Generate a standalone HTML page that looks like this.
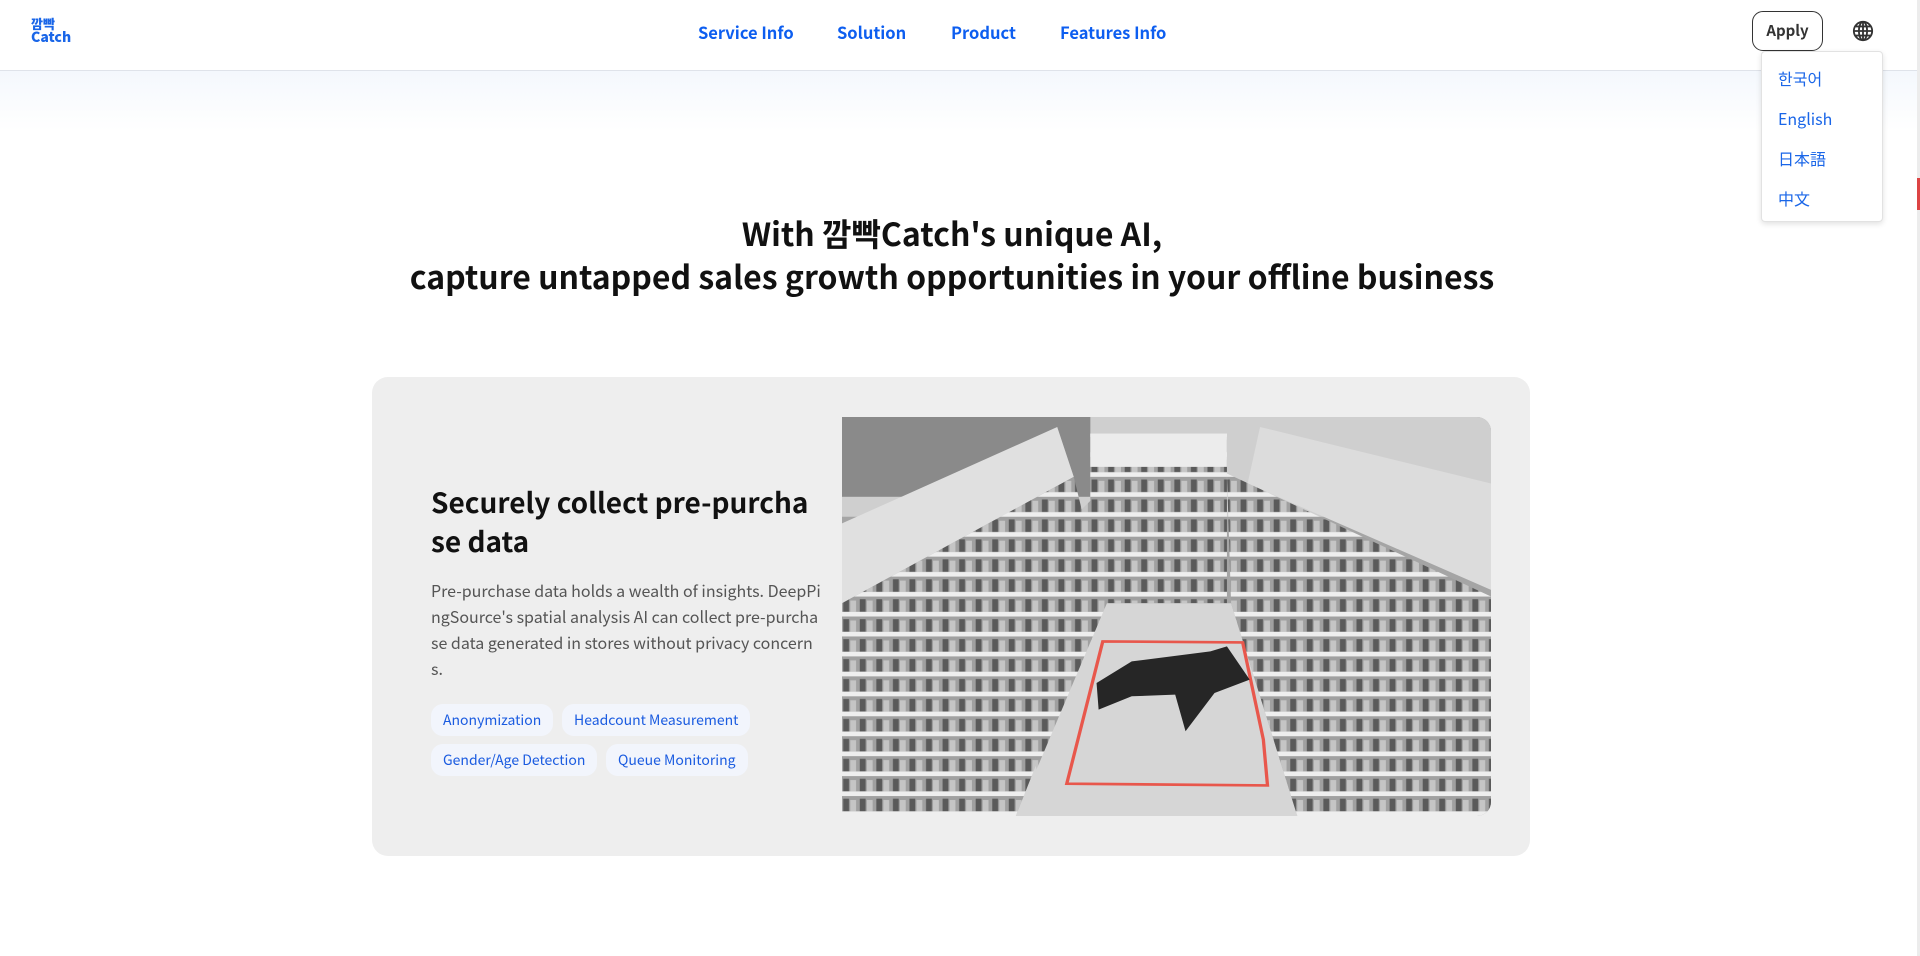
<!DOCTYPE html>
<html><head><meta charset="utf-8">
<style>
*{margin:0;padding:0;box-sizing:border-box}
html,body{width:1920px;height:956px;overflow:hidden;background:#fff;font-family:"Noto Sans CJK KR","Liberation Sans",sans-serif}
.hdr{position:absolute;left:0;top:0;width:1920px;height:71px;border-bottom:1px solid #dfe3ea;background:#fff}
.grad{position:absolute;left:0;top:71px;width:1920px;height:60px;background:linear-gradient(#f4f8fd,#fff)}
.logo{position:absolute;left:31px;top:17px;color:#1a66e8;font-weight:900;line-height:13px;font-size:13px}
.nav{position:absolute;top:19px;font-size:16.5px;font-weight:700;color:#0d5ef0;line-height:26px;white-space:nowrap}
.apply{position:absolute;left:1752px;top:11px;width:71px;height:40px;border:1.5px solid #333;border-radius:11px;font-size:15px;font-weight:700;color:#333;text-align:center;line-height:37px}
.globe{position:absolute;left:1852px;top:20px}
.dd{position:absolute;left:1761px;top:51px;width:122px;height:171px;background:#fff;border:1px solid #e2e2e2;border-radius:4px;box-shadow:0 2px 6px rgba(0,0,0,.12)}
.dd div{position:absolute;left:16px;font-size:16px;color:#1a66e8;line-height:24px}
h1{position:absolute;left:0;top:212px;width:1904px;text-align:center;font-size:32px;font-weight:700;line-height:43px;color:#111}
.card{position:absolute;left:372px;top:377px;width:1158px;height:479px;background:#eeeeee;border-radius:16px}
.title{position:absolute;left:431px;top:483px;font-size:28px;font-weight:700;line-height:39px;color:#111;white-space:nowrap}
.para{position:absolute;left:431px;top:577px;font-size:16px;line-height:26px;color:#555;white-space:nowrap}
.tag{position:absolute;height:32px;border-radius:12px;background:#f2f5fc;color:#1a5be0;font-size:14px;line-height:32px;padding:0 12px;white-space:nowrap}
.img{position:absolute;left:842px;top:417px;width:649px;height:399px;border-radius:0 14px 14px 0;overflow:hidden}
.sb{position:absolute;left:1917px;top:0;width:3px;height:956px;background:#ececec}
</style></head><body>
<div class="hdr"></div><div class="grad"></div>
<div class="logo">깜빡<br><span style="font-size:14px">Catch</span></div>
<div class="nav" style="left:698px">Service Info</div>
<div class="nav" style="left:837px">Solution</div>
<div class="nav" style="left:951px">Product</div>
<div class="nav" style="left:1060px">Features Info</div>
<div class="apply">Apply</div>
<svg class="globe" width="22" height="22" viewBox="0 0 24 24" fill="none" stroke="#333" stroke-width="2"><circle cx="12" cy="12" r="10"/><ellipse cx="12" cy="12" rx="4.5" ry="10"/><line x1="2" y1="12" x2="22" y2="12"/><line x1="12" y1="2" x2="12" y2="22"/><path d="M4 7h16M4 17h16"/></svg>
<div class="dd"><div style="top:14px">한국어</div><div style="top:54px">English</div><div style="top:94px">日本語</div><div style="top:134px">中文</div></div>
<div class="sb"></div><div style="position:absolute;left:1917px;top:178px;width:3px;height:32px;background:#d44"></div>
<h1>With 깜빡Catch's unique AI,<br>capture untapped sales growth opportunities in your offline business</h1>
<div class="card"></div>
<div class="title">Securely collect pre-purcha<br>se data</div>
<div class="para">Pre-purchase data holds a wealth of insights. DeepPi<br>ngSource's spatial analysis AI can collect pre-purcha<br>se data generated in stores without privacy concern<br>s.</div>
<div class="tag" style="left:431px;top:704px">Anonymization</div>
<div class="tag" style="left:562px;top:704px">Headcount Measurement</div>
<div class="tag" style="left:431px;top:744px">Gender/Age Detection</div>
<div class="tag" style="left:606px;top:744px">Queue Monitoring</div>
<div class="img"><svg width="649" height="399" viewBox="0 0 1568 1200" preserveAspectRatio="none">
<defs><pattern id="p" width="40" height="60" patternUnits="userSpaceOnUse"><rect width="40" height="60" fill="#a0a0a0"/><rect x="3" y="8" width="14" height="38" fill="#5a5a5a"/><rect x="20" y="12" width="14" height="34" fill="#c5c5c5"/><rect y="46" width="40" height="14" fill="#eeeeee"/></pattern></defs>
<rect width="1568" height="1200" fill="#a5a5a5"/>
<rect width="1568" height="300" fill="#cfcfcf"/>
<rect x="0" y="0" width="600" height="240" fill="#8a8a8a"/>
<polygon points="0,320 520,30 560,180 0,560" fill="#e0e0e0"/>
<polygon points="1010,30 1568,200 1568,520 980,200" fill="#dcdcdc"/>
<rect x="600" y="50" width="330" height="510" fill="url(#p)"/>
<rect x="600" y="50" width="330" height="100" fill="#ececec"/>
<polygon points="620,560 940,560 1100,1200 420,1200" fill="#d6d6d6"/>
<polygon points="0,560 560,180 630,540 420,1200 0,1200" fill="url(#p)"/>
<polygon points="380,520 610,240 640,560 470,1060" fill="url(#p)"/>
<polygon points="930,170 1568,540 1568,1200 1100,1200 940,560" fill="url(#p)"/>
<path d="M630 675 L968 678 L1018 970 L1028 1108 L543 1103 Z" fill="none" stroke="#e8574c" stroke-width="8"/>
<path d="M615 800 L700 735 L890 705 L930 690 L985 790 L900 830 L830 945 L805 835 L700 840 L620 880 Z" fill="#262626"/>
</svg></div>
</body></html>
